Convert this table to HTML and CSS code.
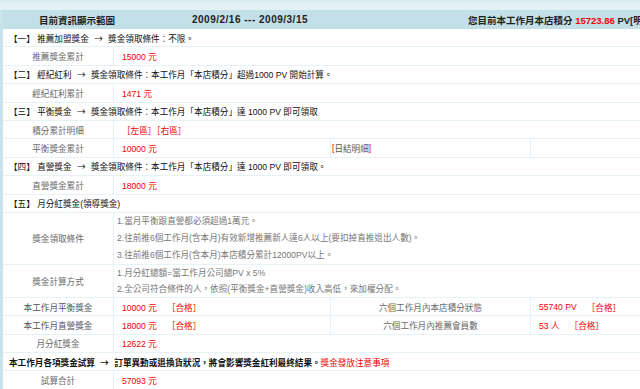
FILE: index.html
```html
<!DOCTYPE html>
<html lang="zh-Hant">
<head>
<meta charset="utf-8">
<title>獎金資訊</title>
<link rel="stylesheet" href="styles.css">
</head>
<body>
<div class="page">
  <div class="topbar"></div>
  <div class="head">
    <div class="h-range">目前資訊顯示範圍</div>
    <div class="h-date">2009/2/16 --- 2009/3/15</div>
    <div class="h-score">您目前本工作月本店積分 <span class="red">15723.86</span> PV[明細]</div>
  </div>
  <div class="grid">
    <div class="sec">【一】 推薦加盟獎金 <span class="arr">→</span> 獎金領取條件：不限。</div>
    <div class="lab">推薦獎金累計</div>
    <div class="val span3">15000 元</div>

    <div class="sec">【二】 經紀紅利 <span class="arr">→</span> 獎金領取條件：本工作月「本店積分」超過1000 PV 開始計算。</div>
    <div class="lab">經紀紅利累計</div>
    <div class="val span3">1471 元</div>

    <div class="sec">【三】 平衡獎金 <span class="arr">→</span> 獎金領取條件：本工作月「本店積分」達 1000 PV 即可領取</div>
    <div class="lab">積分累計明細</div>
    <div class="val span3">［左區］［右區］</div>
    <div class="lab">平衡獎金累計</div>
    <div class="val">10000 元</div>
    <div class="val link"><span class="red">[</span>日結明細<span class="red">]</span></div>
    <div class="val"></div>

    <div class="sec">【四】 直營獎金 <span class="arr">→</span> 獎金領取條件：本工作月「本店積分」達 1000 PV 即可領取。</div>
    <div class="lab">直營獎金累計</div>
    <div class="val span3">18000 元</div>

    <div class="sec">【五】 月分紅獎金(領導獎金)</div>
    <div class="lab">獎金領取條件</div>
    <div class="desc span3 three">
      <p>1.當月平衡跟直營都必須超過1萬元。</p>
      <p>2.往前推6個工作月(含本月)有效新增推薦新人達6人以上(要扣掉直推退出人數)。</p>
      <p>3.往前推6個工作月(含本月)本店積分累計12000PV以上。</p>
    </div>
    <div class="lab">獎金計算方式</div>
    <div class="desc span3 two">
      <p>1.月分紅總額=當工作月公司總PV x 5%</p>
      <p>2.全公司符合條件的人，依照(平衡獎金+直營獎金)收入高低，來加權分配。</p>
    </div>

    <div class="lab dark">本工作月平衡獎金</div>
    <div class="val">10000 元<span class="ok">［合格］</span></div>
    <div class="lab mid">六個工作月內本店積分狀態</div>
    <div class="val">55740 PV<span class="ok">［合格］</span></div>

    <div class="lab dark">本工作月直營獎金</div>
    <div class="val">18000 元<span class="ok">［合格］</span></div>
    <div class="lab mid">六個工作月內推薦會員數</div>
    <div class="val">53 人<span class="ok">［合格］</span></div>

    <div class="lab">月分紅獎金</div>
    <div class="val span3">12622 元</div>

    <div class="sec bold">本工作月各項獎金試算 <span class="arr">→</span> 訂單異動或退換貨狀況，將會影響獎金紅利最終結果。<span class="note">獎金發放注意事項</span></div>
    <div class="lab">試算合計</div>
    <div class="val span3">57093 元</div>
  </div>
</div>
</body>
</html>
```
FILE: styles.css
```css
html, body {
  margin: 0;
  padding: 0;
  background: #ffffff;
  overflow: hidden;
}
body {
  font-family: "Liberation Sans", "Noto Sans CJK TC", sans-serif;
  font-size: 8.6px;
  color: #222;
}
.page {
  width: 700px;
  background: #cbe4eb;
  padding-left: 3px;
}
.topbar {
  height: 10px;
  background: #e3f1f5;
  border-top: 3px solid #d9ecf1;
  box-sizing: border-box;
  margin-left: -3px;
}
.head {
  height: 19px;
  background: #c3dfe7;
  display: grid;
  grid-template-columns: 148px 198px 119px auto;
  align-items: center;
  font-weight: bold;
  color: #1e1e1e;
  font-size: 9.5px;
}
.h-range { text-align: center; }
.h-date {
  text-align: center;
  grid-column: 2;
  font-size: 10px;
  letter-spacing: 0.5px;
}
.h-score { grid-column: 4; white-space: nowrap; }
.red { color: #f40000; }

.grid {
  background: #fff;
  display: grid;
  grid-template-columns: 111px 216px 201px 169px;
  grid-auto-rows: minmax(18.4px, auto);
}
.grid > div {
  box-sizing: border-box;
  border-bottom: 1px solid #e6f2f5;
  display: flex;
  align-items: center;
  white-space: pre;
}
.grid > .desc p { white-space: nowrap; }
.sec {
  grid-column: 1 / -1;
  padding-left: 6px;
  color: #111;
}
.arr {
  font-family: "Noto Sans CJK TC", sans-serif;
  margin: 0 3px;
}
.sec.bold { font-weight: bold; }
.note { color: #f40000; font-weight: normal; }
.lab {
  justify-content: center;
  color: #6a6a6a;
  border-right: 1px solid #e6f2f5;
}
.lab.dark { color: #555; }
.lab.mid { border-left: 1px solid #e6f2f5; }
.val {
  padding-left: 8px;
  color: #f40000;
}
.grid > .val.link {
  color: #555;
  padding-left: 1px;
  border-left: 1px solid #e6f2f5;
  border-right: 1px solid #e6f2f5;
}
.span3 { grid-column: 2 / -1; }
.ok { margin-left: 10px; }
.grid > .desc {
  flex-direction: column;
  align-items: flex-start;
  justify-content: center;
  padding-left: 3px;
  color: #777;
  white-space: nowrap;
}
.desc p { margin: 0; line-height: 17px; }
.grid > .three { height: 52px; }
.grid > .two { height: 33px; }
.two p { line-height: 16px; }
```
